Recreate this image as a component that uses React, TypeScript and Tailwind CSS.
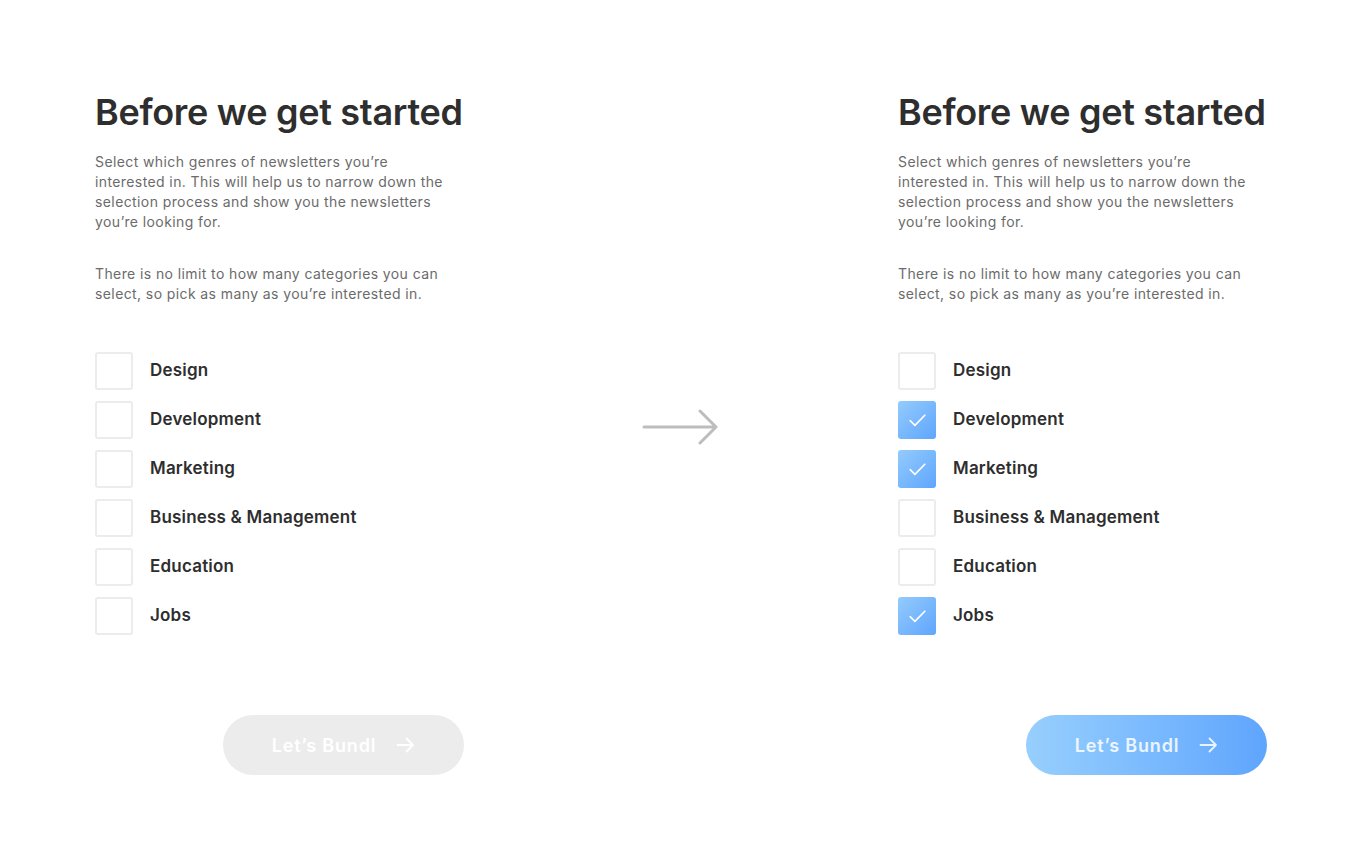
import React from "react";

const cats = ["Design", "Development", "Marketing", "Business & Management", "Education", "Jobs"];

function Check() {
  return (
    <svg width="17" height="13" viewBox="0 0 17 13" fill="none">
      <path d="M1.2 6.6 L5.9 11.4 L15.8 1.2" stroke="white" strokeWidth="1.6" strokeLinecap="round" strokeLinejoin="round" />
    </svg>
  );
}

function Column({ checked, active }: { checked: boolean[]; active: boolean }) {
  return (
    <div className="w-[369px] flex flex-col">
      <h1 className="text-[36px] leading-[44px] font-semibold text-[#2e2e2e] tracking-[-0.3px] whitespace-nowrap">Before we get started</h1>
      <p className="mt-[18px] text-[14px] leading-[20px] text-[#6b6b6b] w-[364px] tracking-[0.4px]">
        Select which genres of newsletters you’re interested in. This will help us to narrow down the selection process and show you the newsletters you’re looking for.
      </p>
      <p className="mt-[32px] text-[14px] leading-[20px] text-[#6b6b6b] w-[364px] tracking-[0.4px]">
        There is no limit to how many categories you can select, so pick as many as you’re interested in.
      </p>
      <div className="mt-[48px] flex flex-col gap-[11px]">
        {cats.map((c, i) => (
          <div key={c} className="flex items-center h-[38px]">
            {checked[i] ? (
              <div className="w-[38px] h-[38px] rounded-[3px] bg-gradient-to-br from-[#94cbfd] to-[#5ea5fc] flex items-center justify-center">
                <Check />
              </div>
            ) : (
              <div className="w-[38px] h-[38px] rounded-[3px] border-2 border-[#ececec] bg-white" />
            )}
            <span className="ml-[17px] text-[17px] font-semibold text-[#2e2e2e] tracking-[0.2px]">{c}</span>
          </div>
        ))}
      </div>
      <div className="mt-[80px] flex justify-end">
        <div
          className={
            "w-[241px] h-[60px] rounded-full flex items-center justify-center gap-[20px] " +
            (active ? "bg-gradient-to-r from-[#97cffd] to-[#5fa5fd]" : "bg-[#ececec]")
          }
        >
          <span className={"text-[18px] font-semibold tracking-[0.8px] " + (active ? "text-white/85" : "text-white")}>Let’s Bundl</span>
          <svg width="19" height="16" viewBox="0 0 19 16" fill="none">
            <path d="M1.5 8 H17 M10.5 1.5 L17 8 L10.5 14.5" stroke={active ? "rgba(255,255,255,0.85)" : "white"} strokeWidth="1.8" strokeLinecap="round" strokeLinejoin="round" />
          </svg>
        </div>
      </div>
    </div>
  );
}

export default function App() {
  return (
    <div className="w-[1360px] h-[864px] bg-white font-['Inter',sans-serif] flex pl-[95px] pt-[90px]">
      <Column checked={[false, false, false, false, false, false]} active={false} />
      <div className="w-[434px] flex justify-center pt-[319px]">
        <svg width="78" height="36" viewBox="0 0 78 36" fill="none">
          <path d="M2 18 H74 M58 2 L74 18 L58 34" stroke="#bdbdbd" strokeWidth="3" strokeLinecap="round" strokeLinejoin="round" />
        </svg>
      </div>
      <Column checked={[false, true, true, false, false, true]} active={true} />
    </div>
  );
}
